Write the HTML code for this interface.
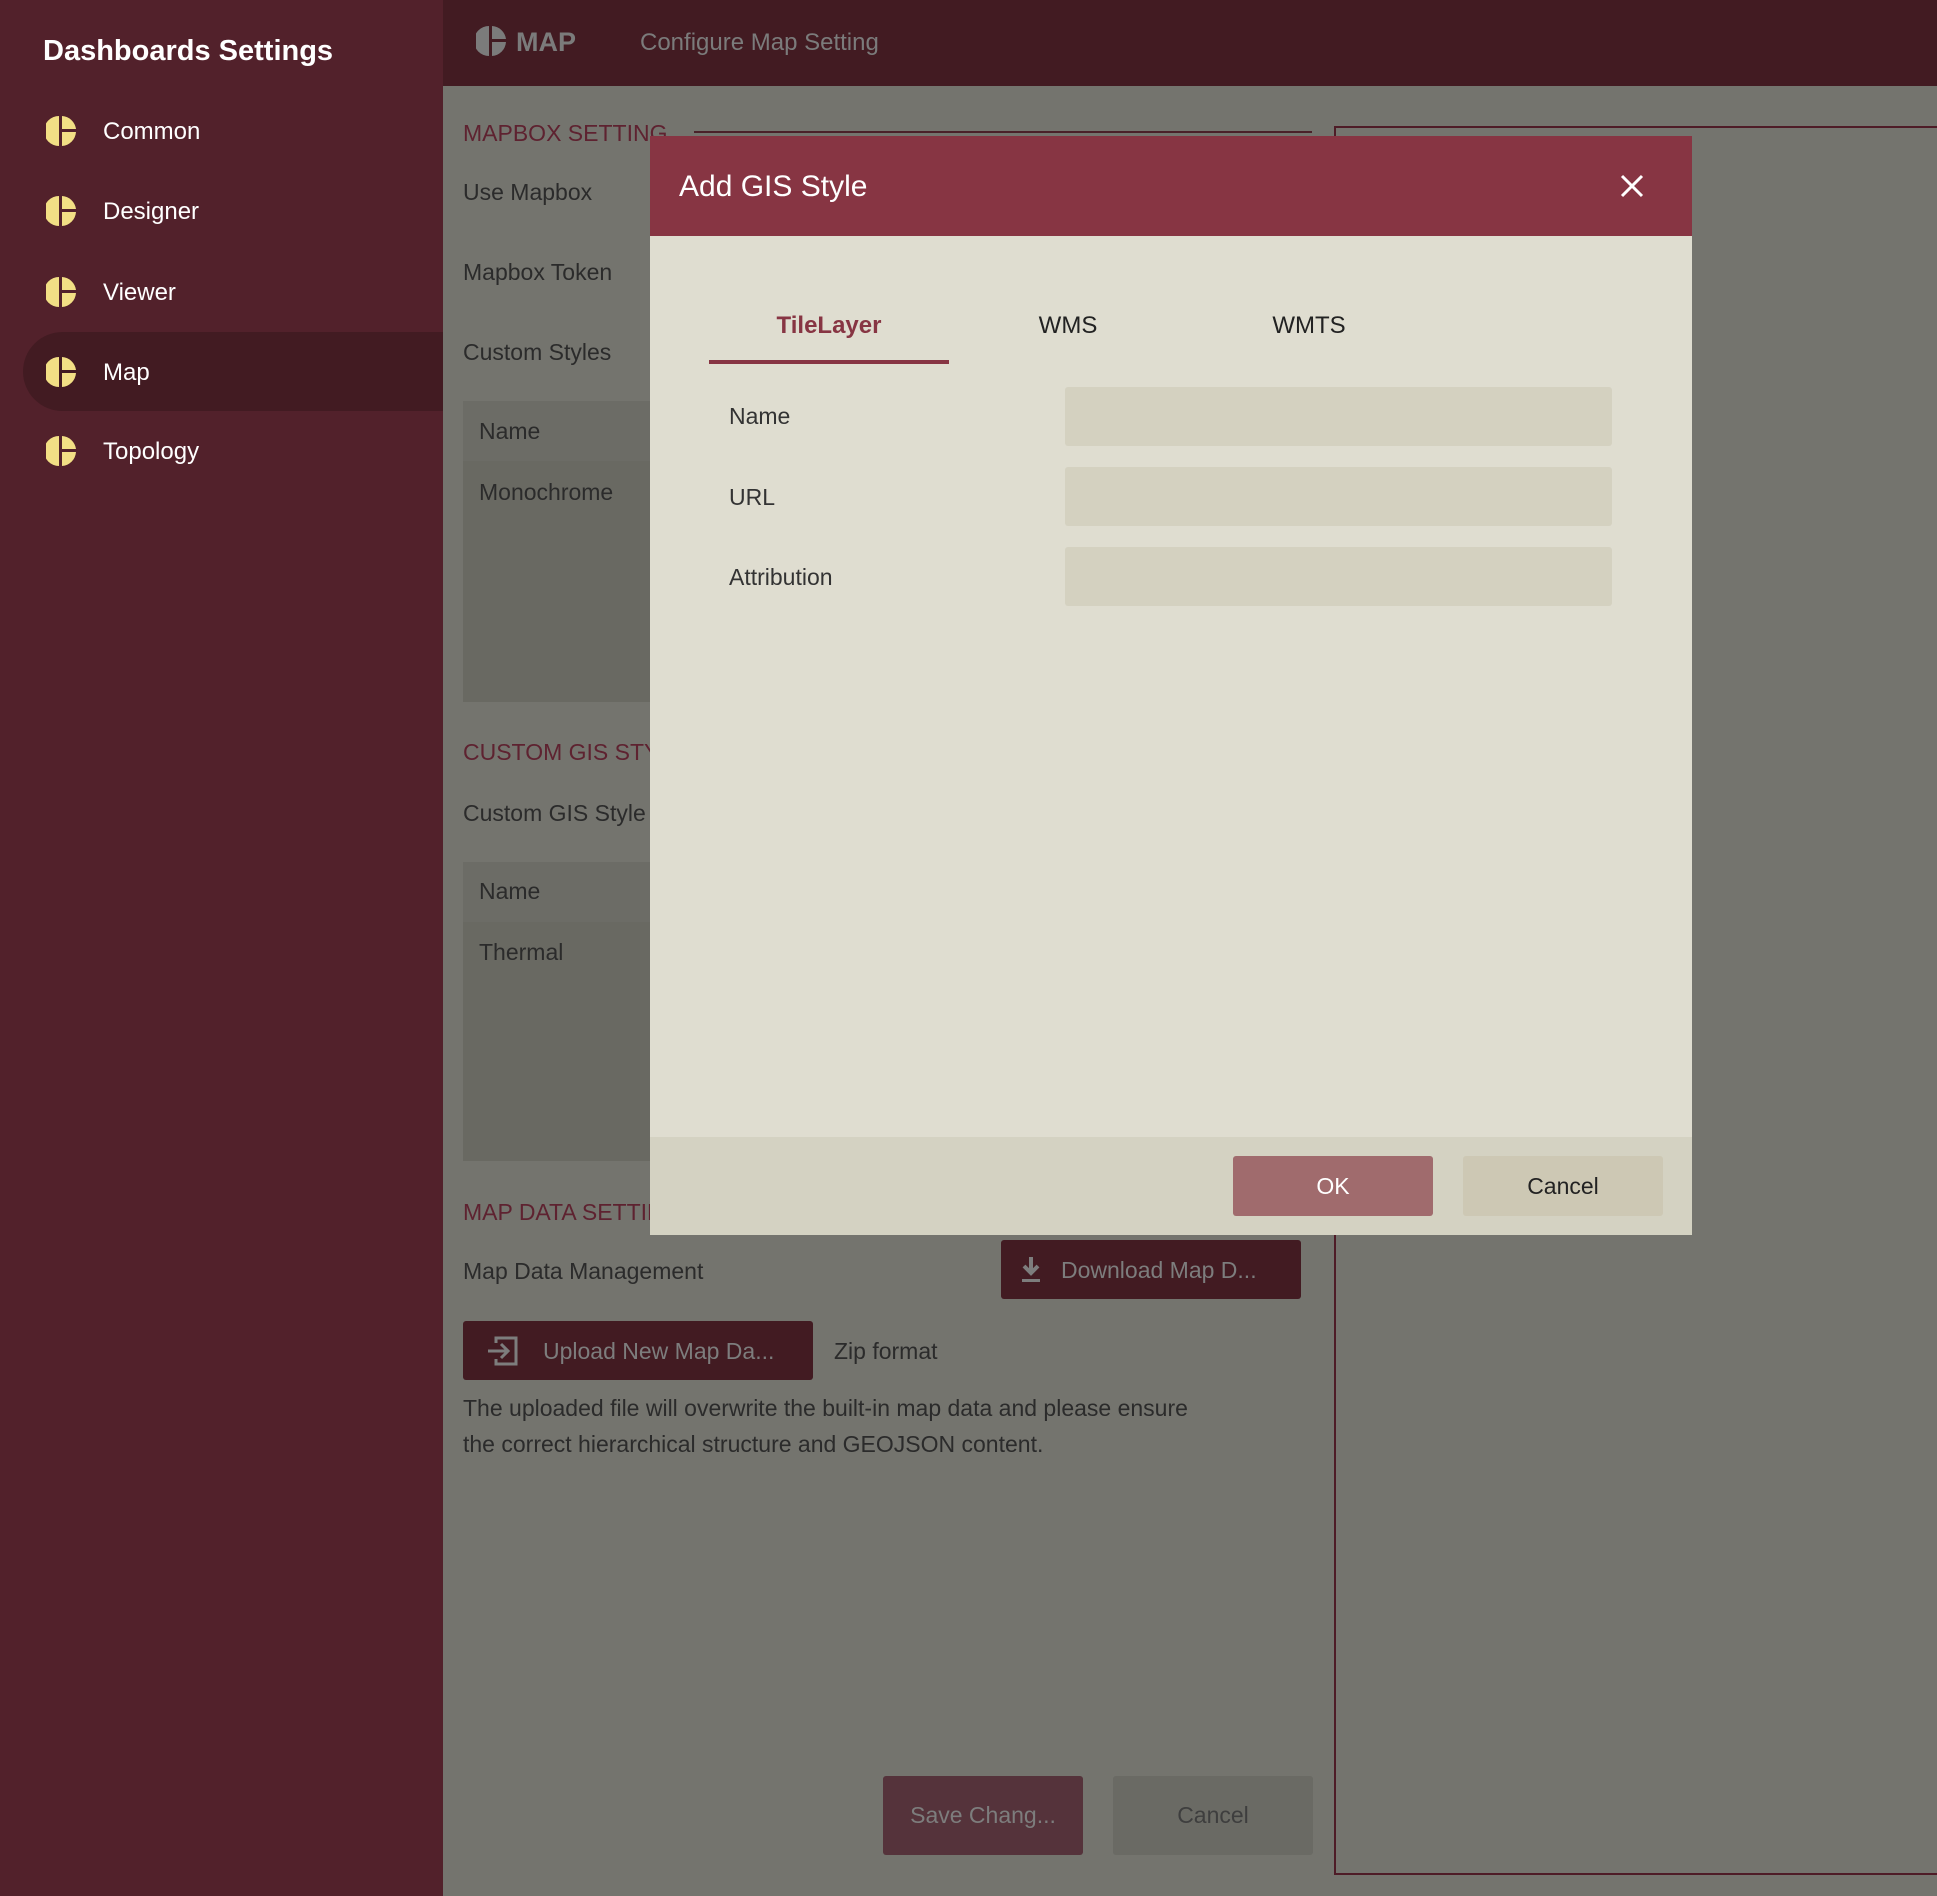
<!DOCTYPE html>
<html><head><meta charset="utf-8"><style>
*{box-sizing:border-box;margin:0;padding:0}
body{width:1937px;height:1896px;position:relative;overflow:hidden;background:#74746e;font-family:"Liberation Sans",sans-serif;}
.a{position:absolute;white-space:nowrap}
.side{left:0;top:0;width:443px;height:1896px;background:#52212b}
.hdr{left:443px;top:0;width:1494px;height:86px;background:#421b22}
.ic{width:30px;height:30px}
.mi{font-size:24px;color:#fff}
.lbl{font-size:23px;color:#2b2b2b}
.sec{font-size:23px;color:#5e2230}
</style></head><body>
<div class="a side"></div>
<div class="a hdr"></div>
<div class="a" style="left:43px;top:35px;font-size:29px;font-weight:bold;color:#fff">Dashboards Settings</div>
<div class="a" style="left:23px;top:332px;width:420px;height:79px;background:#421b22;border-radius:40px 0 0 40px"></div>

<svg width="0" height="0" style="position:absolute"><defs><symbol id="pie" viewBox="0 0 30 30"><path d="M13 0A15 15 0 0 0 13 30Z" fill="currentColor"/><path d="M16 0A15 15 0 0 1 30 13H16Z" fill="currentColor"/><path d="M16 16H30A15 15 0 0 1 16 30Z" fill="currentColor"/></symbol></defs></svg>

<svg class="a ic" style="left:46px;top:116px;color:#f2df85"><use href="#pie"/></svg><div class="a mi" style="left:103px;top:118px">Common</div>
<svg class="a ic" style="left:46px;top:196px;color:#f2df85"><use href="#pie"/></svg><div class="a mi" style="left:103px;top:198px">Designer</div>
<svg class="a ic" style="left:46px;top:277px;color:#f2df85"><use href="#pie"/></svg><div class="a mi" style="left:103px;top:279px">Viewer</div>
<svg class="a ic" style="left:46px;top:357px;color:#f2df85"><use href="#pie"/></svg><div class="a mi" style="left:103px;top:359px">Map</div>
<svg class="a ic" style="left:46px;top:436px;color:#f2df85"><use href="#pie"/></svg><div class="a mi" style="left:103px;top:438px">Topology</div>

<svg class="a ic" style="left:476px;top:26px;color:#7b7b7b"><use href="#pie"/></svg>
<div class="a" style="left:516px;top:27px;font-size:27px;font-weight:bold;color:#7b7b7b">MAP</div>
<div class="a" style="left:640px;top:29px;font-size:24px;color:#7b7b7b">Configure Map Setting</div>

<div class="a" style="left:1334px;top:126px;width:620px;height:1749px;border:2px solid #4e1c27;border-right:none"></div>
<div class="a" style="left:694px;top:131px;width:618px;height:2px;background:#4a2129"></div>

<div class="a sec" style="left:463px;top:120px">MAPBOX SETTING</div>
<div class="a lbl" style="left:463px;top:179px">Use Mapbox</div>
<div class="a lbl" style="left:463px;top:259px">Mapbox Token</div>
<div class="a lbl" style="left:463px;top:339px">Custom Styles</div>
<div class="a" style="left:463px;top:401px;width:200px;height:301px;background:#696962"></div>
<div class="a" style="left:463px;top:401px;width:200px;height:60px;background:#6c6c66"></div>
<div class="a lbl" style="left:479px;top:418px">Name</div>
<div class="a lbl" style="left:479px;top:479px">Monochrome</div>
<div class="a sec" style="left:463px;top:739px">CUSTOM GIS STYLE</div>
<div class="a lbl" style="left:463px;top:800px">Custom GIS Style</div>
<div class="a" style="left:463px;top:862px;width:200px;height:299px;background:#696962"></div>
<div class="a" style="left:463px;top:862px;width:200px;height:60px;background:#6c6c66"></div>
<div class="a lbl" style="left:479px;top:878px">Name</div>
<div class="a lbl" style="left:479px;top:939px">Thermal</div>
<div class="a sec" style="left:463px;top:1199px">MAP DATA SETTING</div>
<div class="a lbl" style="left:463px;top:1258px">Map Data Management</div>

<div class="a" style="left:1001px;top:1240px;width:300px;height:59px;background:#421b22;border-radius:3px"></div>
<svg class="a" style="left:1018px;top:1255px" width="26" height="30" viewBox="0 0 26 30"><path d="M13 2V18M6 11L13 18L20 11" stroke="#7d7d7d" stroke-width="4" fill="none"/><rect x="4" y="24" width="18" height="3" fill="#7d7d7d"/></svg>
<div class="a" style="left:1061px;top:1257px;font-size:23px;color:#7d7d7d">Download Map D...</div>

<div class="a" style="left:463px;top:1321px;width:350px;height:59px;background:#421b22;border-radius:3px"></div>
<svg class="a" style="left:486px;top:1335px" width="34" height="32" viewBox="0 0 34 32"><path d="M10 8V3H30V29H10V24" stroke="#7d7d7d" stroke-width="3" fill="none"/><path d="M2 16H22M15 9L22 16L15 23" stroke="#7d7d7d" stroke-width="3" fill="none"/></svg>
<div class="a" style="left:543px;top:1338px;font-size:23px;color:#7d7d7d">Upload New Map Da...</div>
<div class="a lbl" style="left:834px;top:1338px">Zip format</div>
<div class="a lbl" style="left:463px;top:1390px;line-height:36px;white-space:normal;width:740px">The uploaded file will overwrite the built-in map data and please ensure the correct hierarchical structure and GEOJSON content.</div>

<div class="a" style="left:883px;top:1776px;width:200px;height:79px;background:#55333b;border-radius:3px;font-size:23px;color:#7d7d7d;text-align:center;line-height:79px">Save Chang...</div>
<div class="a" style="left:1113px;top:1776px;width:200px;height:79px;background:#6a6a64;border-radius:3px;font-size:23px;color:#3e3e3e;text-align:center;line-height:79px">Cancel</div>

<!-- modal -->
<div class="a" style="left:650px;top:136px;width:1042px;height:1099px;background:#dfddd0"></div>
<div class="a" style="left:650px;top:136px;width:1042px;height:100px;background:#873543"></div>
<div class="a" style="left:679px;top:170px;font-size:30px;color:#fff">Add GIS Style</div>
<svg class="a" style="left:1620px;top:174px" width="24" height="24" viewBox="0 0 24 24"><path d="M2 2L22 22M22 2L2 22" stroke="#fff" stroke-width="3"/></svg>
<div class="a" style="left:709px;top:312px;width:240px;text-align:center;font-size:24px;font-weight:bold;color:#873543">TileLayer</div>
<div class="a" style="left:709px;top:360px;width:240px;height:4px;background:#873543"></div>
<div class="a" style="left:968px;top:312px;width:200px;text-align:center;font-size:24px;color:#222">WMS</div>
<div class="a" style="left:1209px;top:312px;width:200px;text-align:center;font-size:24px;color:#222">WMTS</div>
<div class="a lbl" style="left:729px;top:403px;color:#333">Name</div>
<div class="a lbl" style="left:729px;top:484px;color:#333">URL</div>
<div class="a lbl" style="left:729px;top:564px;color:#333">Attribution</div>
<div class="a" style="left:1065px;top:387px;width:547px;height:59px;background:#d4d1c0;border-radius:3px"></div>
<div class="a" style="left:1065px;top:467px;width:547px;height:59px;background:#d4d1c0;border-radius:3px"></div>
<div class="a" style="left:1065px;top:547px;width:547px;height:59px;background:#d4d1c0;border-radius:3px"></div>
<div class="a" style="left:650px;top:1137px;width:1042px;height:98px;background:#d4d2c2"></div>
<div class="a" style="left:1233px;top:1156px;width:200px;height:60px;background:#a06b6d;border-radius:3px;font-size:23px;color:#fff;text-align:center;line-height:60px">OK</div>
<div class="a" style="left:1463px;top:1156px;width:200px;height:60px;background:#cdc8b4;border-radius:3px;font-size:23px;color:#222;text-align:center;line-height:60px">Cancel</div>
</body></html>
